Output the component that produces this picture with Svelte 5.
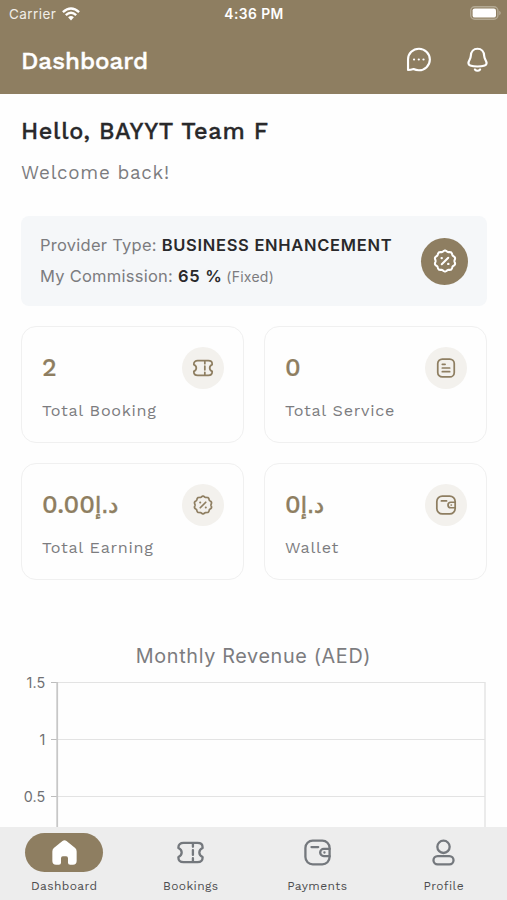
<script>
    const stats = [
        { value: "2", label: "Total Booking", icon: "ticket" },
        { value: "0", label: "Total Service", icon: "document" },
        { value: "0.00", currency: "د.إ", label: "Total Earning", icon: "percent" },
        { value: "0", currency: "د.إ", label: "Wallet", icon: "wallet" },
    ]

    const tabs = [
        { label: "Dashboard", icon: "home" },
        { label: "Bookings", icon: "ticket" },
        { label: "Payments", icon: "wallet" },
        { label: "Profile", icon: "profile" },
    ]

    const ticks = ["1.5", "1", "0.5"]
    let active = $state("Dashboard")

    // scalloped badge outline with ten lobes
    function badgePath(r, wave, lobes) {
        let d = ""
        for (let i = 0; i < 120; i++) {
            const a = (i / 120) * Math.PI * 2
            const rr = r + wave * Math.cos(a * lobes)
            d += `${i ? "L" : "M"}${(12 + rr * Math.sin(a)).toFixed(2)} ${(12 - rr * Math.cos(a)).toFixed(2)}`
        }
        return d + "Z"
    }
    const badge = badgePath(9.2, 0.5, 10)
</script>

{#snippet icon(name)}
    <svg class="icon {name}" viewBox="0 0 24 24" aria-hidden="true">
        {#if name === "ticket"}
            <path d="M6.2 4H17.8C20.4 4 22 5.4 22 7.6V8.3C20.4 9 19.3 10.2 19.3 12S20.4 15 22 15.7V16.4C22 18.6 20.4 20 17.8 20H6.2C3.6 20 2 18.6 2 16.4V15.7C3.6 15 4.7 13.8 4.7 12S3.6 9 2 8.3V7.6C2 5.4 3.6 4 6.2 4Z" />
            <path d="M14 4.5V7.3M14 10V14M14 16.7V19.5" />
        {:else if name === "document"}
            <rect x="3" y="2.2" width="18" height="19.6" rx="5" />
            <path d="M8 8H11M8 12H16M8 16H16" />
        {:else if name === "percent"}
            <path d={badge} />
            <path d="M9 15L15 9" />
            <path class="dot" d="M8.9 9.3H9M15 14.7H15.1" />
        {:else if name === "wallet"}
            <rect x="2" y="2.2" width="20" height="19.6" rx="6" />
            <path d="M22 9H17.2A3 3 0 0 0 17.2 15H22M7 7.5H12.6" />
            <path class="small-dot" d="M17.7 12H17.8" />
        {:else if name === "profile"}
            <circle cx="12" cy="7.3" r="5.1" />
            <rect x="3.7" y="15" width="16.6" height="6.8" rx="3.4" />
        {:else if name === "home"}
            <path class="solid" d="M10.2 1.8Q12 .2 13.8 1.8L21.5 8Q22.8 9.2 22.8 11V19.5Q22.8 22.8 19.5 22.8H17Q15.1 22.8 15.1 21V17Q15.1 15.4 13.5 15.4H10.5Q8.9 15.4 8.9 17V21Q8.9 22.8 7 22.8H4.5Q1.2 22.8 1.2 19.5V11Q1.2 9.2 2.5 8Z" />
        {:else if name === "chat"}
            <path d="M2.7 21.3V12A9.7 9.6 0 1 1 12.3 21.6C10.6 21.6 9 21.2 7.6 20.5C6.3 20.9 4.5 21.3 2.7 21.3Z" />
            <path class="small-dot" d="M8 12H8.1M12.2 12H12.3M16.4 12H16.5" />
        {:else if name === "bell"}
            <path d="M12 1.7C8.2 1.7 5.8 4.5 5.6 8.4C5.4 12 3.3 12.8 3.3 15.6C3.3 18 6 18.7 12 18.7S20.7 18 20.7 15.6C20.7 12.8 18.6 12 18.4 8.4C18.2 4.5 15.8 1.7 12 1.7Z" />
            <path d="M9.5 21.6C10.9 23.2 13.1 23.2 14.5 21.6" />
        {/if}
    </svg>
{/snippet}

<div class="app">
    <header>
        <div class="status">
            <div class="carrier">
                <span>Carrier</span>
                <svg width="18" height="14" viewBox="0 0 18 14" fill="none" stroke="#fff" stroke-width="2.4">
                    <path d="M.9 5.2Q9-2.2 17.1 5.2M3.8 8.2Q9 3.5 14.2 8.2" />
                    <path d="M6.1 10.3Q9 7.9 11.9 10.3L9 13.4Z" fill="#fff" stroke="none" />
                </svg>
            </div>
            <span class="time">4:36 PM</span>
            <svg class="battery" width="31" height="14" viewBox="0 0 31 14">
                <rect x=".7" y=".7" width="27.2" height="12.6" rx="4" fill="none" stroke="#b3a993" stroke-width="1.4" />
                <rect x="2.6" y="2.4" width="23.4" height="9.2" rx="2.2" fill="#fff" />
                <path d="M29.2 4.8Q30.8 5.6 30.8 7T29.2 9.2Z" fill="#b3a993" />
            </svg>
        </div>
        <div class="titlebar">
            <h1>Dashboard</h1>
            <div class="actions">
                <button aria-label="Messages">{@render icon("chat")}</button>
                <button aria-label="Notifications">{@render icon("bell")}</button>
            </div>
        </div>
    </header>

    <main>
        <h2>Hello, BAYYT Team F</h2>
        <p class="welcome">Welcome back!</p>

        <section class="provider">
            <div>
                <p class="type">Provider Type: <b>BUSINESS ENHANCEMENT</b></p>
                <p class="commission">My Commission: <b>65 %</b> <small>(Fixed)</small></p>
            </div>
            <div class="provider-icon">{@render icon("percent")}</div>
        </section>

        <section class="stats">
            {#each stats as stat}
                <div class="card">
                    <div class="card-top">
                        <span class="value">{stat.value}{#if stat.currency}<span class="currency">{stat.currency}</span>{/if}</span>
                        <div class="round">{@render icon(stat.icon)}</div>
                    </div>
                    <p class="label">{stat.label}</p>
                </div>
            {/each}
        </section>

        <section class="chart">
            <h3>Monthly Revenue (AED)</h3>
            <svg width="507" height="190" viewBox="0 0 507 190">
                {#each ticks as tick, i}
                    <text x="45.5" y={14.5 + i * 57} text-anchor="end">{tick}</text>
                    <path d="M58 {9.5 + i * 57}H485" stroke="#e3e3e3" />
                    <path d="M51 {9.5 + i * 57}H58" stroke="#bdbdbd" />
                {/each}
                <path d="M485 9V190" stroke="#e3e3e3" stroke-width="1.4" />
                <path d="M57.2 9V190" stroke="#c7c7c7" stroke-width="1.8" />
            </svg>
        </section>
    </main>

    <nav>
        {#each tabs as tab}
            <button class="tab" class:active={active === tab.label} onclick={() => (active = tab.label)}>
                <span class="pill">{@render icon(tab.icon)}</span>
                <span class="tab-label">{tab.label}</span>
            </button>
        {/each}
    </nav>
</div>

<style>
    :global(body) {
        margin: 0;
        background: #fefefe;
    }
    .app {
        width: 507px;
        height: 900px;
        overflow: hidden;
        display: flex;
        flex-direction: column;
        background: #fefefe;
        font-family: "Work Sans", Inter, "DejaVu Sans", sans-serif;
        color: #7c7c7f;
    }
    h1, h2, h3, p {
        margin: 0;
    }
    button {
        border: none;
        background: none;
        padding: 0;
        font: inherit;
        color: inherit;
    }
    .icon {
        display: block;
        flex: none;
        width: 22px;
        height: 22px;
        fill: none;
        stroke: currentColor;
        stroke-width: 1.9;
        stroke-linecap: round;
        stroke-linejoin: round;
    }
    .icon .solid {
        fill: currentColor;
        stroke: none;
    }
    .icon .dot {
        stroke-width: 2.2;
    }

    header {
        flex: none;
        height: 94px;
        background: #8e7e61;
        color: #fff;
    }
    .status {
        display: grid;
        grid-template-columns: 1fr auto 1fr;
        align-items: center;
        height: 27px;
        padding: 0 6px 0 9px;
        font-family: Inter, sans-serif;
        font-size: 13.5px;
        letter-spacing: 0.45px;
    }
    .carrier {
        display: flex;
        align-items: center;
        gap: 6px;
        color: #f1eee8;
    }
    .time {
        margin-left: -2px;
        font-size: 13.8px;
        font-weight: 600;
    }
    .battery {
        justify-self: end;
        margin-top: -1px;
    }
    .titlebar {
        display: flex;
        justify-content: space-between;
        align-items: center;
        height: 67px;
        padding: 0 17px 0 21px;
    }
    h1 {
        font-size: 24.2px;
        font-weight: 500;
        line-height: 67px;
        -webkit-text-stroke: 0.4px currentColor;
    }
    .actions {
        display: flex;
        align-items: center;
        gap: 33px;
    }
    .actions .icon {
        width: 27px;
        height: 27px;
        margin-top: -2px;
    }
    .actions .bell {
        width: 25px;
        height: 25px;
        stroke-width: 2.1;
    }

    main {
        flex: 1;
        min-height: 0;
        overflow: hidden;
        padding: 0 20px 0 21px;
    }
    h2 {
        margin-top: 20px;
        line-height: 34px;
        font-size: 23.5px;
        font-weight: 500;
        letter-spacing: 0.7px;
        color: #29292b;
        -webkit-text-stroke: 0.3px currentColor;
    }
    .welcome {
        margin-top: 12px;
        line-height: 26px;
        font-size: 18.8px;
        letter-spacing: 0.7px;
    }
    .provider {
        display: flex;
        justify-content: space-between;
        align-items: center;
        box-sizing: border-box;
        height: 90px;
        margin-top: 30px;
        padding: 0 19px;
        border-radius: 8px;
        background: #f5f7f9;
        font-family: Inter, sans-serif;
        font-size: 16.5px;
        line-height: 31px;
        letter-spacing: 0.25px;
    }
    .provider b {
        font-weight: 600;
        letter-spacing: 0.7px;
        color: #29292b;
    }
    .commission b {
        margin-right: -1px;
    }
    .provider small {
        font-size: 14px;
    }
    .provider-icon {
        display: grid;
        place-items: center;
        width: 47px;
        height: 47px;
        border-radius: 50%;
        background: #8e7e61;
        color: #fff;
    }
    .provider-icon .icon {
        width: 26px;
        height: 26px;
    }

    .stats {
        display: grid;
        grid-template-columns: 1fr 1fr;
        gap: 20px;
        margin-top: 20px;
    }
    .card {
        box-sizing: border-box;
        height: 117px;
        padding: 20px 19px 20px 20px;
        border: 1.5px solid #f0f0f0;
        border-radius: 15px;
    }
    .card-top {
        display: flex;
        justify-content: space-between;
        align-items: center;
        height: 42px;
    }
    .value {
        font-size: 25px;
        font-weight: 500;
        line-height: 42px;
        color: #8e7e61;
        -webkit-text-stroke: 0.2px currentColor;
    }
    .currency {
        font-family: "DejaVu Sans", sans-serif;
        font-size: 22.5px;
        font-weight: 400;
        line-height: 1;
        -webkit-text-stroke: 0.6px currentColor;
    }
    .round {
        display: grid;
        place-items: center;
        box-sizing: border-box;
        width: 42px;
        height: 42px;
        padding-right: 1px;
        border-radius: 50%;
        background: #f3f1ed;
        color: #8e7e61;
    }
    .label {
        margin-top: 11px;
        line-height: 22px;
        font-size: 16.2px;
        letter-spacing: 0.7px;
    }

    .chart {
        margin: 62px -20px 0 -21px;
    }
    h3 {
        line-height: 28px;
        font-family: Inter, sans-serif;
        font-size: 19.8px;
        font-weight: 400;
        text-align: center;
        letter-spacing: 0.65px;
    }
    .chart svg {
        display: block;
        margin-top: 3px;
    }
    .chart text {
        font-family: Inter, sans-serif;
        font-size: 14.3px;
        letter-spacing: 0.2px;
        fill: #707073;
    }

    nav {
        flex: none;
        display: grid;
        grid-template-columns: repeat(4, 1fr);
        box-sizing: border-box;
        height: 73px;
        padding-left: 1px;
        background: #ededed;
    }
    .tab {
        display: flex;
        flex-direction: column;
        align-items: center;
        padding-top: 6px;
        color: #74787d;
    }
    .pill {
        display: grid;
        place-items: center;
        width: 78px;
        height: 39px;
        border-radius: 20px;
    }
    .pill .icon {
        width: 29px;
        height: 29px;
    }
    .pill .home {
        width: 27px;
        height: 27px;
    }
    .tab.active .pill {
        background: #8e7e61;
        color: #fff;
    }
    .tab-label {
        margin-top: 5px;
        line-height: 18px;
        font-size: 12px;
        letter-spacing: 0.4px;
        color: #4d4d50;
    }
</style>
